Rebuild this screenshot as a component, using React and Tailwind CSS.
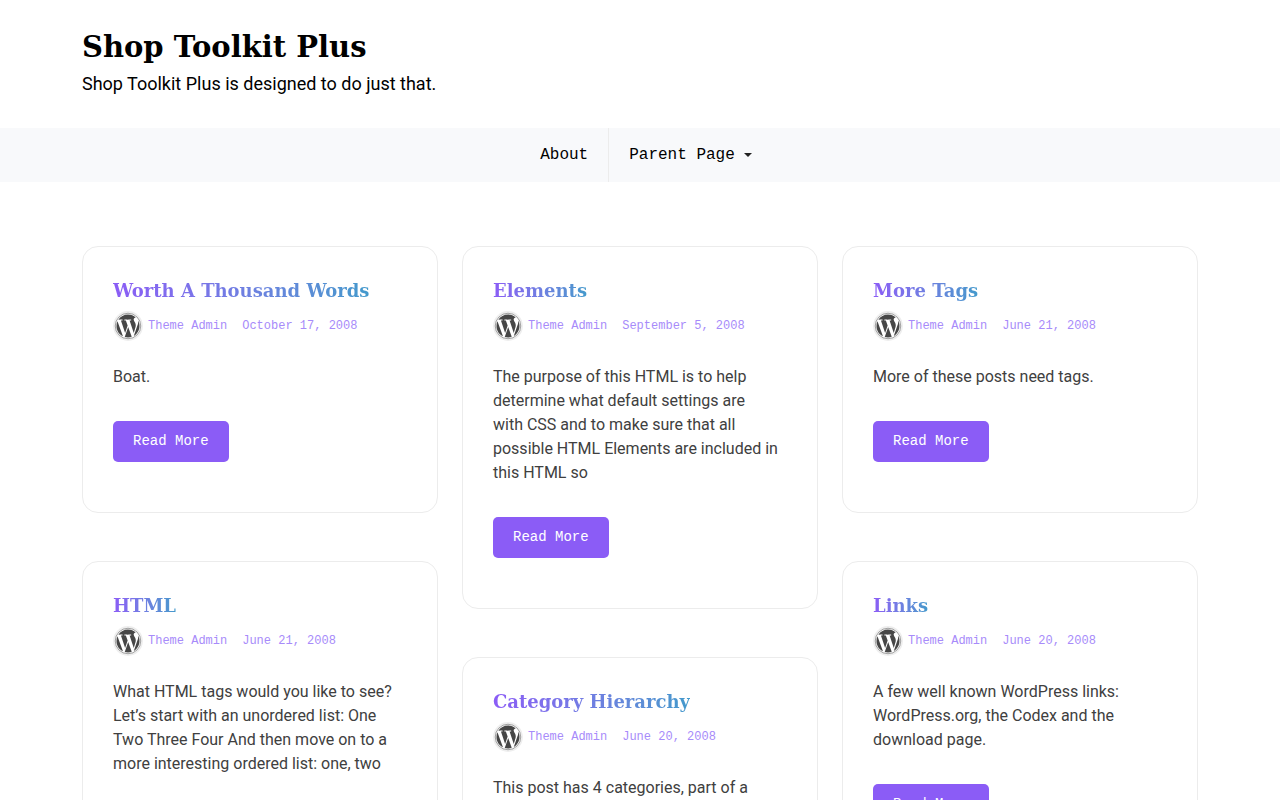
import React from "react";

const columns = [
  [
    {
      title: "Worth A Thousand Words",
      date: "October 17, 2008",
      text: "Boat.",
    },
    {
      title: "HTML",
      date: "June 21, 2008",
      text: "What HTML tags would you like to see? Let’s start with an unordered list: One Two Three Four And then move on to a more interesting ordered list: one, two",
    },
  ],
  [
    {
      title: "Elements",
      date: "September 5, 2008",
      text: "The purpose of this HTML is to help determine what default settings are\nwith CSS and to make sure that all\npossible HTML Elements are included in this HTML so",
    },
    {
      title: "Category Hierarchy",
      date: "June 20, 2008",
      text: "This post has 4 categories, part of a",
    },
  ],
  [
    {
      title: "More Tags",
      date: "June 21, 2008",
      text: "More of these posts need tags.",
    },
    {
      title: "Links",
      date: "June 20, 2008",
      text: "A few well known WordPress links: WordPress.org, the Codex and the download page.",
    },
  ],
];

function Avatar() {
  return (
    <svg viewBox="-10 -10 532 532" className="size-[30px]" aria-hidden="true">
      <circle cx="256" cy="256" r="264" fill="#eeeeee" />
      <circle cx="256" cy="256" r="226" fill="#fff" stroke="#464646" strokeWidth="9" />
      <path
        fill="#464646"
        transform="translate(10 10) scale(.96)"
        d="M61.7 169.4l101.5 278C92.2 413 43.3 340.2 43.3 256c0-30.9 6.6-60.1 18.4-86.6zm337.9 75.9c0-26.3-9.4-44.5-17.5-58.7-10.8-17.5-20.9-32.4-20.9-49.9 0-19.6 14.8-37.8 35.7-37.8.9 0 1.8.1 2.8.2-37.9-34.7-88.3-55.9-143.7-55.9-74.3 0-139.7 38.1-177.8 95.9 5 .2 9.7.3 13.7.3 22.2 0 56.7-2.7 56.7-2.7 11.5-.7 12.8 16.2 1.4 17.5 0 0-11.5 1.3-24.3 2l77.5 230.4L249.8 247l-33.1-90.8c-11.5-.7-22.3-2-22.3-2-11.5-.7-10.1-18.2 1.3-17.5 0 0 35.1 2.7 56 2.7 22.2 0 56.7-2.7 56.7-2.7 11.5-.7 12.8 16.2 1.4 17.5 0 0-11.5 1.3-24.3 2l76.9 228.7 21.2-70.9c9-29.4 16-50.5 16-68.7zm-139.9 29.3l-63.8 185.5c19.1 5.6 39.2 8.7 60.1 8.7 24.8 0 48.5-4.3 70.6-12.1-.6-.9-1.1-1.9-1.5-2.9l-65.4-179.2zm183-120.7c.9 6.8 1.4 14 1.4 21.9 0 21.6-4 45.8-16.2 76.2l-65 187.9C426.2 403 468.7 334.5 468.7 256c0-37-9.4-71.8-26-102.1z"
      />
    </svg>
  );
}

function PostCard({ post }) {
  return (
    <article className="rounded-2xl border border-[#ececec] px-[30px] pt-7 pb-[50px]">
      <h2 className="font-['DejaVu_Serif',serif] text-lg leading-8 font-bold">
        <a
          href="#"
          className="bg-linear-to-r from-[#8b5cf6] to-[#4299cc] bg-clip-text text-transparent"
        >
          {post.title}
        </a>
      </h2>
      <div className="mt-1 flex h-[30px] items-center font-['Liberation_Mono',monospace] text-xs text-[#a78bfa]">
        <Avatar />
        <a href="#" className="ml-[5px]">
          Theme Admin
        </a>
        <a href="#" className="ml-[15px]">
          <time>{post.date}</time>
        </a>
      </div>
      <p className="mt-6 text-base leading-6 whitespace-pre-line text-[#404040]">
        {post.text}
      </p>
      <a
        href="#"
        className="mt-8 inline-block rounded-[5px] bg-[#8b5cf6] px-5 py-2.5 font-['Liberation_Mono',monospace] text-sm leading-[21px] text-white"
      >
        Read More
      </a>
    </article>
  );
}

export default function App() {
  return (
    <div className="bg-white font-[Roboto,sans-serif] text-black">
      <header className="h-32 pt-7">
        <div className="mx-auto max-w-[1140px] px-3">
          <h1 className="font-['DejaVu_Serif',serif] text-[29px] leading-[38px] font-bold">
            <a href="#">Shop Toolkit Plus</a>
          </h1>
          <p className="mt-1 text-lg leading-7">
            Shop Toolkit Plus is designed to do just that.
          </p>
        </div>
      </header>
      <nav className="bg-[#f8f9fb] font-['Liberation_Mono',monospace] text-base">
        <ul className="flex justify-center leading-[54px]">
          <li className="border-r border-[#ececec]">
            <a href="#" className="block px-5">
              About
            </a>
          </li>
          <li>
            <a href="#" className="flex items-center gap-[9px] pr-2 pl-5">
              Parent Page
              <span className="border-x-4 border-t-4 border-x-transparent border-t-[#222]"></span>
            </a>
          </li>
        </ul>
      </nav>
      <main className="mx-auto grid max-w-[1140px] grid-cols-3 items-start gap-6 px-3 py-16">
        {columns.map((posts, i) => (
          <div key={i} className="flex flex-col gap-12">
            {posts.map((post) => (
              <PostCard key={post.title} post={post} />
            ))}
          </div>
        ))}
      </main>
    </div>
  );
}
